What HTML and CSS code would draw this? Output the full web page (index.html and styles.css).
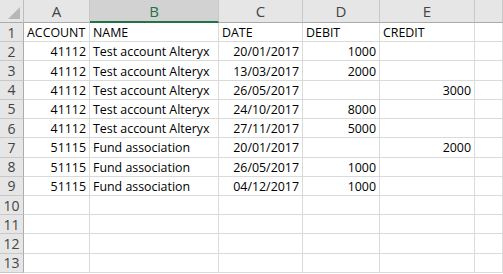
FILE: index.html
```html
<!DOCTYPE html>
<html lang="en">

<head>
    <meta charset="UTF-8">
    <title>Sheet</title>
    <link rel="stylesheet" href="styles.css">
</head>

<body>
    <div class="sheet">
        <div class="corner"><span class="tri"></span></div>
        <div class="col-head">A</div>
        <div class="col-head active">B</div>
        <div class="col-head">C</div>
        <div class="col-head">D</div>
        <div class="col-head">E</div>
        <div class="col-head"></div>

        <div class="row-head">1</div>
        <div class="cell">ACCOUNT</div>
        <div class="cell">NAME</div>
        <div class="cell">DATE</div>
        <div class="cell">DEBIT</div>
        <div class="cell">CREDIT</div>
        <div class="cell"></div>

        <div class="row-head">2</div>
        <div class="cell num">41112</div>
        <div class="cell">Test account Alteryx</div>
        <div class="cell num">20/01/2017</div>
        <div class="cell num">1000</div>
        <div class="cell"></div>
        <div class="cell"></div>

        <div class="row-head">3</div>
        <div class="cell num">41112</div>
        <div class="cell">Test account Alteryx</div>
        <div class="cell num">13/03/2017</div>
        <div class="cell num">2000</div>
        <div class="cell"></div>
        <div class="cell"></div>

        <div class="row-head">4</div>
        <div class="cell num">41112</div>
        <div class="cell">Test account Alteryx</div>
        <div class="cell num">26/05/2017</div>
        <div class="cell"></div>
        <div class="cell num">3000</div>
        <div class="cell"></div>

        <div class="row-head">5</div>
        <div class="cell num">41112</div>
        <div class="cell">Test account Alteryx</div>
        <div class="cell num">24/10/2017</div>
        <div class="cell num">8000</div>
        <div class="cell"></div>
        <div class="cell"></div>

        <div class="row-head">6</div>
        <div class="cell num">41112</div>
        <div class="cell">Test account Alteryx</div>
        <div class="cell num">27/11/2017</div>
        <div class="cell num">5000</div>
        <div class="cell"></div>
        <div class="cell"></div>

        <div class="row-head">7</div>
        <div class="cell num">51115</div>
        <div class="cell">Fund association</div>
        <div class="cell num">20/01/2017</div>
        <div class="cell"></div>
        <div class="cell num">2000</div>
        <div class="cell"></div>

        <div class="row-head">8</div>
        <div class="cell num">51115</div>
        <div class="cell">Fund association</div>
        <div class="cell num">26/05/2017</div>
        <div class="cell num">1000</div>
        <div class="cell"></div>
        <div class="cell"></div>

        <div class="row-head">9</div>
        <div class="cell num">51115</div>
        <div class="cell">Fund association</div>
        <div class="cell num">04/12/2017</div>
        <div class="cell num">1000</div>
        <div class="cell"></div>
        <div class="cell"></div>

        <div class="row-head">10</div>
        <div class="cell"></div>
        <div class="cell"></div>
        <div class="cell"></div>
        <div class="cell"></div>
        <div class="cell"></div>
        <div class="cell"></div>

        <div class="row-head">11</div>
        <div class="cell"></div>
        <div class="cell"></div>
        <div class="cell"></div>
        <div class="cell"></div>
        <div class="cell"></div>
        <div class="cell"></div>

        <div class="row-head">12</div>
        <div class="cell"></div>
        <div class="cell"></div>
        <div class="cell"></div>
        <div class="cell"></div>
        <div class="cell"></div>
        <div class="cell"></div>

        <div class="row-head">13</div>
        <div class="cell"></div>
        <div class="cell"></div>
        <div class="cell"></div>
        <div class="cell"></div>
        <div class="cell"></div>
        <div class="cell"></div>
    </div>
</body>

</html>
```

FILE: styles.css
```css
* {
    margin: 0;
    padding: 0;
    box-sizing: border-box;
}

body {
    width: 503px;
    height: 274px;
    overflow: hidden;
    background-color: #fff;
    font-family: "Open Sans", "Liberation Sans", sans-serif;
}

.sheet {
    display: grid;
    grid-template-columns: 24px 66px 129px 84px 77px 95px 28px;
    grid-template-rows: 23px repeat(13, 19.23px);
}

.corner,
.col-head,
.row-head {
    background-color: #e6e6e6;
    color: #444;
}

.corner {
    position: relative;
    border-right: 1px solid #bdbdbd;
    border-bottom: 1px solid #ababab;
}

.corner .tri {
    position: absolute;
    right: 3px;
    bottom: 3px;
    width: 0;
    height: 0;
    border-left: 12px solid transparent;
    border-bottom: 12px solid #b7b7b7;
}

.col-head {
    display: flex;
    justify-content: center;
    align-items: center;
    font-size: 15px;
    border-right: 1px solid #c8c8c8;
    border-bottom: 1px solid #ababab;
}

.col-head.active {
    background-color: #d2d2d2;
    color: #217346;
    border-bottom: 2px solid #217346;
}

.row-head {
    display: flex;
    justify-content: center;
    align-items: center;
    font-size: 14px;
    border-right: 1px solid #ababab;
    border-bottom: 1px solid #c8c8c8;
}

.cell {
    display: flex;
    align-items: center;
    padding: 1px 3px 0;
    font-size: 12.4px;
    color: #000;
    white-space: nowrap;
    border-right: 1px solid #dadada;
    border-bottom: 1px solid #dadada;
}

.cell.num {
    justify-content: flex-end;
}
```
